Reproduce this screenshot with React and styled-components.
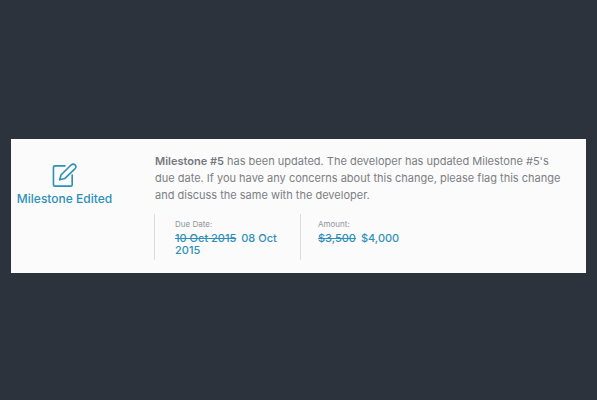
import React from "react";
import styled, { createGlobalStyle } from "styled-components";

const GlobalStyle = createGlobalStyle`
  * { box-sizing: border-box; }
  body {
    margin: 0;
    background: #2d333c;
    font-family: Inter, "Open Sans", sans-serif;
  }
`;

const Page = styled.main`
  min-height: 100vh;
  display: flex;
  align-items: center;
  padding: 12px 11px 0;
`;

const Card = styled.article`
  flex: 1;
  display: grid;
  grid-template-columns: 143px 1fr;
  padding-bottom: 13px;
  background: #fbfbfb;
`;

const Status = styled.div`
  display: flex;
  flex-direction: column;
  align-items: center;
  padding: 24px 36px 0 0;
  color: #2e90b8;
`;

const EditIcon = styled.svg`
  width: 25px;
  height: 25px;
  fill: none;
  stroke: currentColor;
  stroke-linecap: round;
  stroke-linejoin: round;
`;

const StatusTitle = styled.h2`
  margin: 3px 0 0;
  font-size: 12px;
  line-height: 16px;
  font-weight: 500;
  white-space: nowrap;
`;

const Content = styled.div`
  padding: 14px 16px 0 0;
`;

const Message = styled.p`
  margin: 0;
  padding-left: 1px;
  color: #7c7e83;
  font-size: 11px;
  line-height: 17px;
`;

const Subject = styled.strong`
  font-weight: 600;
  color: #76787e;
`;

const Changes = styled.dl`
  display: grid;
  grid-template-columns: 146px 1fr;
  margin: 10px 0 0;
`;

const Change = styled.div`
  min-height: 46px;
  padding: 5px ${({ $inset }) => $inset}px 0;
  border-left: 1px solid #dcdcdc;
`;

const Label = styled.dt`
  color: #929498;
  font-size: 8px;
  line-height: 10px;
`;

const Value = styled.dd`
  margin: 3px 0 0;
  color: #2e90b8;
  font-size: 11px;
  line-height: 12px;
  font-weight: 500;
`;

const Previous = styled.del`
  margin-right: 2px;
`;

export default function App() {
  return (
    <>
      <GlobalStyle />
      <Page>
        <Card>
          <Status>
            <EditIcon viewBox="0 0 26 26" strokeWidth="1.7" aria-hidden="true">
              <path d="M13.500 3H3Q1.500 3 1.500 4.500V22.500Q1.500 24 3 24H19.500Q21 24 21 22.500V12.500" />
              <path d="M8 17.500L9.300 12.500L19.800 2.100Q22 .2 24 2T23.800 6.100L13.200 16.200Z" />
            </EditIcon>
            <StatusTitle>Milestone Edited</StatusTitle>
          </Status>
          <Content>
            <Message>
              <Subject>Milestone #5</Subject> has been updated. The developer has
              updated Milestone #5's due date. If you have any concerns about this
              change, please flag this change and discuss the same with the developer.
            </Message>
            <Changes>
              <Change $inset={20}>
                <Label>Due Date:</Label>
                <Value><Previous>10 Oct 2015</Previous> 08 Oct 2015</Value>
              </Change>
              <Change $inset={17}>
                <Label>Amount:</Label>
                <Value><Previous>$3,500</Previous> $4,000</Value>
              </Change>
            </Changes>
          </Content>
        </Card>
      </Page>
    </>
  );
}
